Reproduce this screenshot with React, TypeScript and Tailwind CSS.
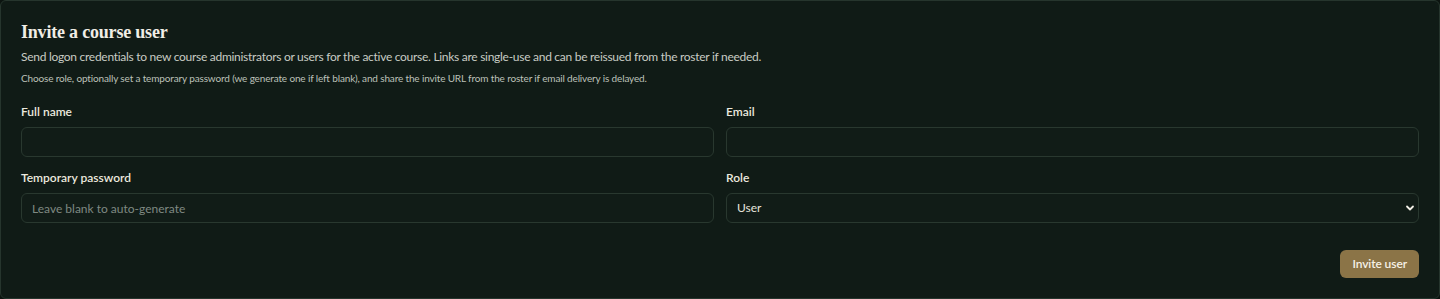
import React from 'react';

const Field: React.FC<{ label: string; children: React.ReactNode }> = ({ label, children }) => (
  <div className="flex flex-col gap-[7px]">
    <label className="text-[12px] leading-4 font-semibold text-[#ece9df]">{label}</label>
    {children}
  </div>
);

const inputCls =
  'h-[30px] w-full rounded-md border border-[#29382f] bg-[#111c17] px-[10px] text-[12px] text-[#e6e4dc] placeholder:text-[#7f8982] outline-none';

export default function App() {
  return (
    <div className="min-h-[299px] bg-[#0c1410] font-['Lato',sans-serif]">
      <div className="rounded-md border border-[#26352d] bg-[#101b16] p-5">
        <h2 className="font-['Liberation_Serif',serif] text-[18px] leading-[23px] font-bold tracking-[-0.2px] text-[#f1eee6]">
          Invite a course user
        </h2>
        <p className="mt-[3px] text-[12px] leading-5 tracking-[-0.28px] text-[#c8ccc4]">
          Send logon credentials to new course administrators or users for the active course. Links are single-use and can be reissued from the roster if needed.
        </p>
        <p className="mt-[3px] text-[10px] leading-4 tracking-[-0.15px] text-[#bcc1b9]">
          Choose role, optionally set a temporary password (we generate one if left blank), and share the invite URL from the roster if email delivery is delayed.
        </p>
        <div className="mt-[18px] grid grid-cols-2 gap-x-3 gap-y-[13px]">
          <Field label="Full name">
            <input className={inputCls} />
          </Field>
          <Field label="Email">
            <input className={inputCls} />
          </Field>
          <Field label="Temporary password">
            <input className={inputCls} placeholder="Leave blank to auto-generate" />
          </Field>
          <Field label="Role">
            <div className="relative">
              <select className={inputCls + ' appearance-none'} defaultValue="user">
                <option value="user">User</option>
                <option value="admin">Course administrator</option>
              </select>
              <svg
                className="pointer-events-none absolute right-[4px] top-1/2 -translate-y-1/2"
                width="10"
                height="10"
                viewBox="0 0 10 10"
                fill="none"
              >
                <path d="M2 3.5 5 6.5 8 3.5" stroke="#f1eee6" strokeWidth="1.8" strokeLinecap="round" strokeLinejoin="round" />
              </svg>
            </div>
          </Field>
        </div>
        <div className="mt-[27px] flex justify-end">
          <button className="h-[28px] rounded-md bg-[#8b7447] px-[12px] text-[12px] font-semibold tracking-[-0.1px] text-[#f6f1e6]">
            Invite user
          </button>
        </div>
      </div>
    </div>
  );
}
